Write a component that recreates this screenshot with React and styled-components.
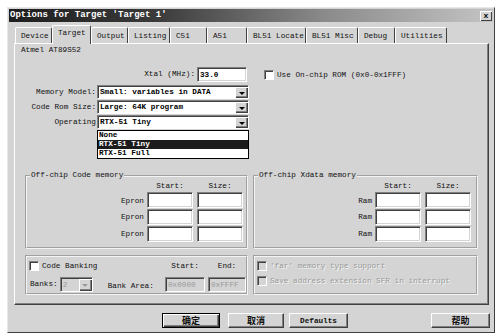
import React from 'react';
import styled, { createGlobalStyle } from 'styled-components';

const FACE = '#d4d4d4';
const DARK = '#404040';
const SHADOW = '#808080';

const GlobalStyle = createGlobalStyle`
  html, body { margin: 0; padding: 0; background: #fff; }
  body {
    font-family: "Liberation Mono", "DejaVu Sans Mono", monospace;
    font-size: 7.7px;
    color: #111;
  }
  * { box-sizing: border-box; }
`;

const TABS = [
  { label: 'Device', w: 37 },
  { label: 'Target', w: 39, active: true },
  { label: 'Output', w: 37 },
  { label: 'Listing', w: 42 },
  { label: 'C51', w: 37 },
  { label: 'A51', w: 40 },
  { label: 'BL51 Locate', w: 59 },
  { label: 'BL51 Misc', w: 52 },
  { label: 'Debug', w: 37 },
  { label: 'Utilities', w: 52 },
];

function CheckBox({ disabled }) {
  return <Box $disabled={disabled} />;
}

function Select({ value, disabled, children }) {
  return (
    <SelectBox $disabled={disabled}>
      <SelectValue $disabled={disabled}>{value}</SelectValue>
      <ArrowButton>
        <Triangle $disabled={disabled} />
      </ArrowButton>
      {children}
    </SelectBox>
  );
}

export default function App() {
  return (
    <>
      <GlobalStyle />
      <Dialog>
        <TitleBar>
          <TitleText>Options for Target 'Target 1'</TitleText>
          <CloseButton>x</CloseButton>
        </TitleBar>

        <TabStrip>
          {TABS.map((t) => (
            <Tab key={t.label} $w={t.w} $active={t.active}>
              {t.label}
            </Tab>
          ))}
        </TabStrip>

        <Panel>
          <DeviceName>Atmel AT89S52</DeviceName>

          <TopSection>
            <TopLeft>
              <XtalRow>
                <Label>Xtal (MHz):</Label>
                <Field>33.0</Field>
              </XtalRow>
              <SelectRow $mt={3}>
                <Label>Memory Model:</Label>
                <Select value="Small: variables in DATA" />
              </SelectRow>
              <SelectRow $mt={1}>
                <Label>Code Rom Size:</Label>
                <Select value="Large: 64K program" />
              </SelectRow>
              <SelectRow $mt={1}>
                <Label>Operating</Label>
                <Select value="RTX-51 Tiny">
                  <DropList>
                    <DropItem>None</DropItem>
                    <DropItem $selected>RTX-51 Tiny</DropItem>
                    <DropItem>RTX-51 Full</DropItem>
                  </DropList>
                </Select>
              </SelectRow>
            </TopLeft>
            <TopRight>
              <CheckItem>
                <CheckBox />
                Use On-chip ROM (0x0-0x1FFF)
              </CheckItem>
            </TopRight>
          </TopSection>

          <GroupRow>
            <Group $w={223} $h={78}>
              <Legend>Off-chip Code memory</Legend>
              <MemGrid $pr={3} $lg={3}>
                <span />
                <ColHead>Start:</ColHead>
                <ColHead>Size:</ColHead>
                {[0, 1, 2].map((i) => (
                  <React.Fragment key={i}>
                    <RowLabel>Epron</RowLabel>
                    <Field />
                    <Field />
                  </React.Fragment>
                ))}
              </MemGrid>
            </Group>
            <Group $w={225} $h={78}>
              <Legend>Off-chip Xdata memory</Legend>
              <MemGrid $pr={5} $lg={5}>
                <span />
                <ColHead>Start:</ColHead>
                <ColHead>Size:</ColHead>
                {[0, 1, 2].map((i) => (
                  <React.Fragment key={i}>
                    <RowLabel>Ram</RowLabel>
                    <Field />
                    <Field />
                  </React.Fragment>
                ))}
              </MemGrid>
            </Group>
          </GroupRow>

          <GroupRow $mt={6}>
            <Group $w={223} $h={40}>
              <BankGrid>
                <CheckItem $pl={2}>
                  <CheckBox />
                  Code Banking
                </CheckItem>
                <ColHead>Start:</ColHead>
                <ColHead>End:</ColHead>
                <BankLeft>
                  <span>Banks:</span>
                  <BankSelect>
                    <Select value="2" disabled />
                  </BankSelect>
                  <AreaLabel>Bank Area:</AreaLabel>
                </BankLeft>
                <Field $disabled>0x0000</Field>
                <Field $disabled>0xFFFF</Field>
              </BankGrid>
            </Group>
            <Group $w={225} $h={40}>
              <OptionList>
                <CheckItem $pl={2} $disabled>
                  <CheckBox disabled />
                  'far' memory type support
                </CheckItem>
                <CheckItem $pl={2} $disabled>
                  <CheckBox disabled />
                  Save address extension SFR in interrupt
                </CheckItem>
              </OptionList>
            </Group>
          </GroupRow>
        </Panel>

        <ButtonRow>
          <Button $w={58} $default $cjk>确定</Button>
          <Button $w={56} $ml={8} $cjk>取消</Button>
          <Button $w={59} $ml={5}>Defaults</Button>
          <Button $w={59} $ml="auto" $cjk>帮助</Button>
        </ButtonRow>
      </Dialog>
    </>
  );
}

const Dialog = styled.div`
  margin: 7px 0 0 7px;
  width: 488px;
  height: 326px;
  padding: 1px;
  background: ${FACE};
  border: 1px solid;
  border-color: #e8e8e8 ${DARK} ${DARK} #e8e8e8;
  display: flex;
  flex-direction: column;
`;

const TitleBar = styled.div`
  height: 13px;
  display: flex;
  align-items: center;
  justify-content: space-between;
  padding: 0 1px 0 1px;
  background: linear-gradient(to right, #1e1e1e 0%, #3a3a3a 30%, #8a8a8a 65%, #c4c4c4 100%);
`;

const TitleText = styled.span`
  color: #fff;
  font-size: 9px;
  font-weight: bold;
  line-height: 13px;
`;

const CloseButton = styled.span`
  width: 12px;
  height: 10px;
  margin-top: 1px;
  display: flex;
  align-items: center;
  justify-content: center;
  background: ${FACE};
  color: #000;
  font-size: 8px;
  font-weight: bold;
  line-height: 8px;
  box-shadow: inset 1px 1px 0 #fff, inset -1px -1px 0 ${DARK};
`;

const TabStrip = styled.div`
  display: flex;
  align-items: flex-end;
  height: 21px;
  padding-left: 6px;
  position: relative;
  z-index: 1;
`;

const Tab = styled.div`
  width: ${(p) => p.$w}px;
  height: ${(p) => (p.$active ? 19 : 16)}px;
  margin-bottom: ${(p) => (p.$active ? -1 : 0)}px;
  padding: ${(p) => (p.$active ? '3px' : '4px')} 0 0 5px;
  background: ${FACE};
  border-top: 1px solid #fff;
  border-left: 1px solid #fff;
  border-right: 1px solid ${DARK};
  border-radius: 2px 2px 0 0;
  line-height: 9px;
  white-space: nowrap;
`;

const Panel = styled.div`
  position: relative;
  width: 475px;
  height: 262px;
  margin-left: 5px;
  padding-top: 2px;
  border: 1px solid;
  border-color: #fff ${DARK} ${DARK} #fff;
  box-shadow: inset -1px -1px 0 ${SHADOW};
`;

const DeviceName = styled.div`
  margin-left: 6px;
  line-height: 9px;
`;

const TopSection = styled.div`
  display: flex;
  margin-top: 12px;
`;

const TopLeft = styled.div`
  width: 233px;
  display: flex;
  flex-direction: column;
`;

const TopRight = styled.div`
  margin: 3px 0 0 16px;
`;

const XtalRow = styled.div`
  display: grid;
  grid-template-columns: 180px 50px;
  column-gap: 2px;
  height: 15px;
`;

const SelectRow = styled.div`
  display: grid;
  grid-template-columns: 81px 152px;
  column-gap: 1px;
  height: 14px;
  margin-top: ${(p) => p.$mt || 0}px;
`;

const Label = styled.span`
  text-align: right;
  align-self: center;
  line-height: 9px;
  white-space: nowrap;
`;

const Field = styled.div`
  height: 100%;
  padding: 0 2px;
  display: flex;
  align-items: center;
  background: ${(p) => (p.$disabled ? FACE : '#fff')};
  color: ${(p) => (p.$disabled ? '#9a9a9a' : '#000')};
  font-weight: ${(p) => (p.$disabled ? 'normal' : 'bold')};
  border: 1px solid;
  border-color: ${SHADOW} #fff #fff ${SHADOW};
  box-shadow: inset 1px 1px 0 ${DARK}, inset -1px -1px 0 ${FACE};
  white-space: nowrap;
  overflow: hidden;
`;

const SelectBox = styled.div`
  position: relative;
  height: 100%;
  display: flex;
  background: ${(p) => (p.$disabled ? FACE : '#fff')};
  border: 1px solid;
  border-color: ${SHADOW} #fff #fff ${SHADOW};
  box-shadow: inset 1px 1px 0 ${DARK};
  padding: 1px 0 0 1px;
`;

const SelectValue = styled.span`
  flex: 1;
  padding-left: 1px;
  align-self: center;
  line-height: 9px;
  font-weight: ${(p) => (p.$disabled ? 'normal' : 'bold')};
  color: ${(p) => (p.$disabled ? '#9a9a9a' : '#000')};
  white-space: nowrap;
  overflow: hidden;
`;

const ArrowButton = styled.span`
  width: 13px;
  display: flex;
  align-items: center;
  justify-content: center;
  background: ${FACE};
  box-shadow: inset 1px 1px 0 #fff, inset -1px -1px 0 ${DARK}, inset -2px -2px 0 ${SHADOW};
`;

const Triangle = styled.span`
  width: 0;
  height: 0;
  border-left: 3px solid transparent;
  border-right: 3px solid transparent;
  border-top: 3px solid ${(p) => (p.$disabled ? '#9a9a9a' : '#000')};
  margin-top: 1px;
`;

const DropList = styled.div`
  position: absolute;
  top: calc(100% + 2px);
  left: -1px;
  right: -1px;
  background: #fff;
  border: 1px solid #000;
  z-index: 2;
`;

const DropItem = styled.div`
  height: 9px;
  line-height: 9px;
  padding-left: 1px;
  font-weight: bold;
  background: ${(p) => (p.$selected ? '#1c1c1c' : '#fff')};
  color: ${(p) => (p.$selected ? '#fff' : '#000')};
`;

const CheckItem = styled.div`
  display: flex;
  align-items: center;
  gap: 3px;
  padding-left: ${(p) => p.$pl || 0}px;
  line-height: 10px;
  white-space: nowrap;
  color: ${(p) => (p.$disabled ? '#9a9a9a' : 'inherit')};
  text-shadow: ${(p) => (p.$disabled ? '1px 1px 0 #f4f4f4' : 'none')};
`;

const Box = styled.span`
  width: 10px;
  height: 10px;
  flex: none;
  background: ${(p) => (p.$disabled ? FACE : '#fff')};
  border: 1px solid;
  border-color: ${SHADOW} #fff #fff ${SHADOW};
  box-shadow: inset 1px 1px 0 ${DARK};
`;

const GroupRow = styled.div`
  display: flex;
  gap: 5px;
  margin: ${(p) => (p.$mt != null ? p.$mt : 42)}px 0 0 10px;
`;

const Group = styled.fieldset`
  width: ${(p) => p.$w}px;
  height: ${(p) => p.$h}px;
  margin: 0;
  padding: 0;
  min-width: 0;
  border: 2px groove #f4f4f4;
`;

const Legend = styled.legend`
  margin-left: 3px;
  padding: 0 1px;
  line-height: 9px;
`;

const MemGrid = styled.div`
  display: grid;
  grid-template-columns: 1fr 46px 46px;
  grid-template-rows: 9px repeat(3, 16px);
  column-gap: 4px;
  row-gap: 1px;
  padding: 2px ${(p) => p.$pr}px 0 0;

  & > :nth-child(4) {
    margin-top: 2px;
  }
  & > span:first-child {
    grid-column: 1;
  }
`;

const ColHead = styled.span`
  text-align: center;
  align-self: center;
  line-height: 9px;
`;

const RowLabel = styled.span`
  text-align: right;
  align-self: center;
  line-height: 9px;
  padding-right: 0;
  margin-right: -1px;
`;

const BankGrid = styled.div`
  display: grid;
  grid-template-columns: 135px 40px 38px;
  grid-template-rows: 12px 15px;
  column-gap: 3px;
  row-gap: 5px;
  padding-top: 3px;
`;

const BankLeft = styled.div`
  display: flex;
  align-items: center;
  padding-left: 3px;
  line-height: 9px;
`;

const BankSelect = styled.div`
  width: 33px;
  height: 15px;
  margin-left: 2px;
`;

const AreaLabel = styled.span`
  margin: 4px 0 0 15px;
`;

const OptionList = styled.div`
  display: flex;
  flex-direction: column;
  gap: 5px;
  padding-top: 4px;
`;

const ButtonRow = styled.div`
  display: flex;
  margin-top: 8px;
  padding: 0 3px 0 153px;
`;

const Button = styled.div`
  width: ${(p) => p.$w}px;
  height: 15px;
  margin-left: ${(p) => (p.$ml === 'auto' ? 'auto' : `${p.$ml || 0}px`)};
  display: flex;
  align-items: center;
  justify-content: center;
  background: ${FACE};
  font-family: ${(p) => (p.$cjk ? '"Noto Sans CJK SC", sans-serif' : 'inherit')};
  font-size: ${(p) => (p.$cjk ? '9px' : '7.7px')};
  font-weight: bold;
  color: #111;
  border: 1px solid;
  border-color: ${(p) => (p.$default ? '#000' : `#fff ${DARK} ${DARK} #fff`)};
  box-shadow: ${(p) =>
    p.$default
      ? `inset 1px 1px 0 #fff, inset -1px -1px 0 ${DARK}, inset -2px -2px 0 ${SHADOW}`
      : `inset -1px -1px 0 ${SHADOW}`};
`;
